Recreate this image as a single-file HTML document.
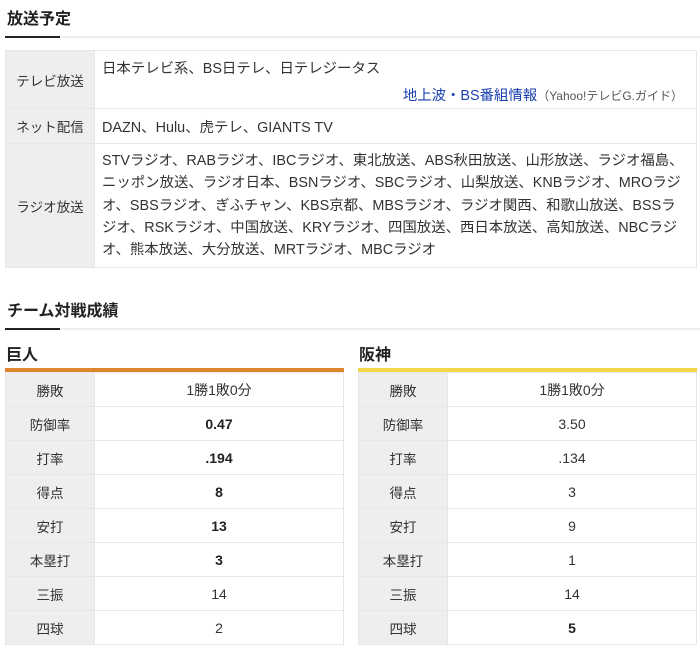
<!DOCTYPE html>
<html><head><meta charset="utf-8"><style>
*{margin:0;padding:0;box-sizing:border-box}
body{width:700px;height:656px;background:#fff;font-family:"Liberation Sans","Noto Sans CJK JP",sans-serif;color:#333;font-size:14px;position:relative;overflow:hidden}
.h{position:absolute;left:7px;font-size:16px;font-weight:bold;color:#222}
.ul{position:absolute;left:5px;right:0;height:2px;background:#eee}
.ul:before{content:"";position:absolute;left:0;top:0;width:55px;height:2px;background:#222}
.a{position:absolute}
table{border-collapse:collapse;position:absolute}
td{border:1px solid #e6e6e6;height:34px;text-align:center;font-size:14px}
td.l{background:#eee;width:89px;font-size:13.5px}
b{font-weight:bold;color:#222}
</style></head><body>
<div class="h" style="top:5px">放送予定</div>
<div class="ul" style="top:36px"></div>

<table style="left:5px;top:50px;width:692px">
<tr><td class="l" style="height:58px">テレビ放送</td><td style="text-align:left;vertical-align:top;padding:6px 0 0 7px;font-size:14.4px">日本テレビ系、BS日テレ、日テレジータス<div style="text-align:right;padding:6px 13px 0 0"><span style="color:#1a3fb0">地上波・BS番組情報</span><span style="font-size:12px;color:#555">（Yahoo!テレビG.ガイド）</span></div></td></tr>
<tr><td class="l" style="height:35px">ネット配信</td><td style="text-align:left;padding-left:7px;font-size:14.4px">DAZN、Hulu、虎テレ、GIANTS TV</td></tr>
<tr><td class="l" style="height:123px">ラジオ放送</td><td style="text-align:left;padding:6px 0 6px 7px;line-height:22.3px;font-size:14.4px;white-space:nowrap">STVラジオ、RABラジオ、IBCラジオ、東北放送、ABS秋田放送、山形放送、ラジオ福島、<br>ニッポン放送、ラジオ日本、BSNラジオ、SBCラジオ、山梨放送、KNBラジオ、MROラジ<br>オ、SBSラジオ、ぎふチャン、KBS京都、MBSラジオ、ラジオ関西、和歌山放送、BSSラ<br>ジオ、RSKラジオ、中国放送、KRYラジオ、四国放送、西日本放送、高知放送、NBCラジ<br>オ、熊本放送、大分放送、MRTラジオ、MBCラジオ</td></tr>
</table>

<div class="h" style="top:297px">チーム対戦成績</div>
<div class="ul" style="top:328px"></div>

<div class="h" style="top:341px;left:6px">巨人</div>
<div class="a" style="left:5px;top:368px;width:339px;height:4px;background:#e0852f"></div>
<table style="left:5px;top:372px;width:339px">
<tr><td class="l">勝敗</td><td>1勝1敗0分</td></tr>
<tr><td class="l">防御率</td><td><b>0.47</b></td></tr>
<tr><td class="l">打率</td><td><b>.194</b></td></tr>
<tr><td class="l">得点</td><td><b>8</b></td></tr>
<tr><td class="l">安打</td><td><b>13</b></td></tr>
<tr><td class="l">本塁打</td><td><b>3</b></td></tr>
<tr><td class="l">三振</td><td>14</td></tr>
<tr><td class="l">四球</td><td>2</td></tr>
</table>

<div class="h" style="top:341px;left:359px">阪神</div>
<div class="a" style="left:358px;top:368px;width:339px;height:4px;background:#f3d84a"></div>
<table style="left:358px;top:372px;width:339px">
<tr><td class="l">勝敗</td><td>1勝1敗0分</td></tr>
<tr><td class="l">防御率</td><td>3.50</td></tr>
<tr><td class="l">打率</td><td>.134</td></tr>
<tr><td class="l">得点</td><td>3</td></tr>
<tr><td class="l">安打</td><td>9</td></tr>
<tr><td class="l">本塁打</td><td>1</td></tr>
<tr><td class="l">三振</td><td>14</td></tr>
<tr><td class="l">四球</td><td><b>5</b></td></tr>
</table>
</body></html>
